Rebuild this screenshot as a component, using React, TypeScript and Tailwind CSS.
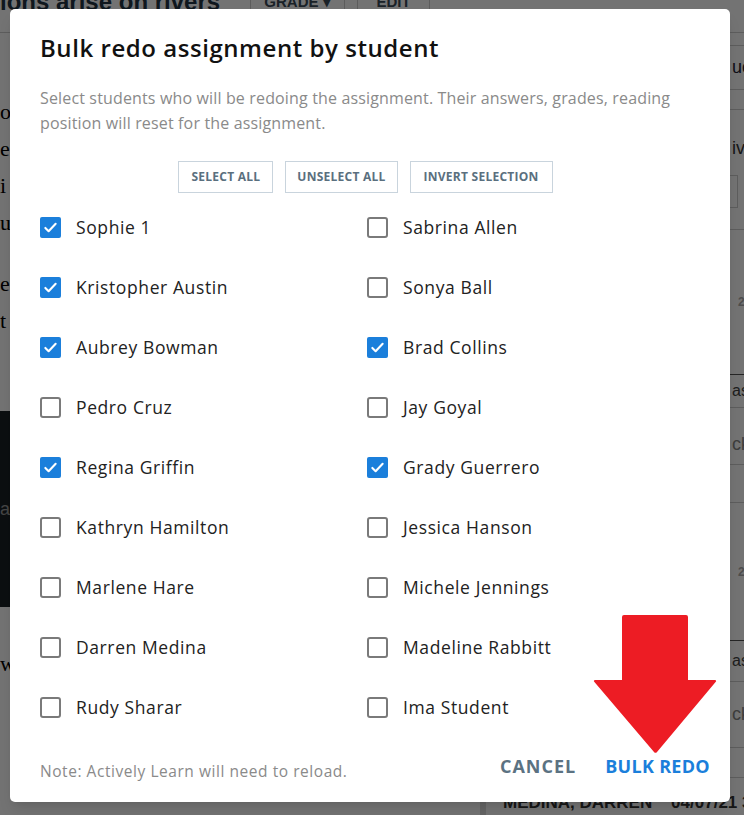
import React, { useState } from 'react';

type Student = {
  name: string;
  checked: boolean;
};

const initialStudents: Student[] = [
  { name: 'Sophie 1', checked: true },
  { name: 'Sabrina Allen', checked: false },
  { name: 'Kristopher Austin', checked: true },
  { name: 'Sonya Ball', checked: false },
  { name: 'Aubrey Bowman', checked: true },
  { name: 'Brad Collins', checked: true },
  { name: 'Pedro Cruz', checked: false },
  { name: 'Jay Goyal', checked: false },
  { name: 'Regina Griffin', checked: true },
  { name: 'Grady Guerrero', checked: true },
  { name: 'Kathryn Hamilton', checked: false },
  { name: 'Jessica Hanson', checked: false },
  { name: 'Marlene Hare', checked: false },
  { name: 'Michele Jennings', checked: false },
  { name: 'Darren Medina', checked: false },
  { name: 'Madeline Rabbitt', checked: false },
  { name: 'Rudy Sharar', checked: false },
  { name: 'Ima Student', checked: false },
];

const Checkbox = ({ checked }: { checked: boolean }) =>
  checked ? (
    <span className="flex h-[21px] w-[21px] shrink-0 items-center justify-center rounded-[2px] bg-[#1b7fdb]">
      <svg width="15" height="15" viewBox="0 0 16 16" fill="none">
        <path d="M2.5 8.5l3.5 3.5 7.5-8" stroke="white" strokeWidth="2.2" strokeLinecap="round" strokeLinejoin="round" />
      </svg>
    </span>
  ) : (
    <span className="h-[21px] w-[21px] shrink-0 rounded-[3px] border-2 border-[#7a7a7a] bg-white" />
  );

// the page that sits dimmed behind the dialog
const BackgroundPage = () => (
  <div className="flex h-[815px] w-full flex-col bg-white font-['Liberation_Sans',sans-serif]">
    <div className="flex h-[33px] shrink-0 border-b border-[#cfcfcf]">
      <span className="-mt-[10px] w-[250px] text-[24px] font-bold leading-[24px] text-[#223344]">ions arise on rivers</span>
      <span className="-mt-[7px] flex h-[39px] w-[95px] justify-center border-x border-[#cfcfcf] text-[15px] font-bold leading-[18px] text-[#3a4a58]">GRADE ▾</span>
      <span className="-mt-[7px] ml-[12px] flex h-[39px] w-[73px] justify-center border-x border-[#cfcfcf] text-[15px] font-bold leading-[18px] text-[#3a4a58]">EDIT</span>
    </div>
    <div className="flex flex-1">
      <div className="flex w-[275px] flex-col font-['Liberation_Serif',serif] text-[22px] leading-[37px] text-black">
        <div className="flex flex-col pt-[60px]">
          <span>o</span>
          <span>e</span>
          <span>i</span>
          <span>u</span>
          <span className="mt-[24px]">e</span>
          <span>t</span>
        </div>
        <div className="mt-[72px] flex h-[196px] items-center bg-[#1c2227] font-['Liberation_Sans',sans-serif] text-[18px] text-[#999]">as</div>
        <span className="mt-[38px]">w</span>
      </div>
      <div className="flex-1" />
      <div className="flex w-[264px] flex-col border-l-[6px] border-[#ddd] text-[18px]">
        <div className="h-[12px]" />
        <div className="flex h-[45px] items-center border-y border-[#cfcfcf] pl-[246px] text-[#223]">uc</div>
        <div className="h-[20px] border-b border-[#cfcfcf]" />
        <div className="flex h-[120px] flex-col border-b border-[#cfcfcf] pl-[246px] pt-[26px] text-[#333]">
          <span className="leading-[24px]">ivi</span>
          <span className="-ml-[10px] mt-[15px] h-[33px] w-[16px] border border-[#cfcfcf]" />
        </div>
        <div className="flex h-[145px] items-center border-b border-[#555] pl-[252px] text-[12px] font-bold text-[#aaa]">21</div>
        <div className="flex h-[33px] items-center border-b border-[#cfcfcf] pl-[246px] text-[16px] text-[#444]">asi</div>
        <div className="flex h-[57px] items-end border-b border-[#cfcfcf] pb-[6px] pl-[246px] text-[#888]">ck</div>
        <div className="h-[38px] border-b border-[#cfcfcf]" />
        <div className="flex h-[138px] items-center border-b border-[#555] pl-[252px] text-[12px] font-bold text-[#aaa]">21</div>
        <div className="flex h-[41px] items-center border-b border-[#cfcfcf] pl-[246px] text-[16px] text-[#444]">asi</div>
        <div className="flex h-[66px] items-center border-b border-[#cfcfcf] pl-[246px] text-[#888]">ck</div>
        <div className="h-[30px] border-b border-[#cfcfcf]" />
        <div className="whitespace-nowrap pl-[17px] pt-[14px] text-[17px] font-bold leading-[22px] text-[#333]">MEDINA, DARREN&nbsp;&nbsp;&nbsp; 04/07/21 3:45</div>
      </div>
    </div>
  </div>
);

export default function App() {
  const [students, setStudents] = useState<Student[]>(initialStudents);

  const toggle = (idx: number) => {
    setStudents((prev) => prev.map((s, i) => (i === idx ? { ...s, checked: !s.checked } : s)));
  };
  const setAll = (fn: (s: Student) => boolean) => {
    setStudents((prev) => prev.map((s) => ({ ...s, checked: fn(s) })));
  };

  return (
    <div className="relative h-[815px] w-full overflow-hidden font-['Open_Sans',sans-serif]">
      <BackgroundPage />
      <div className="absolute inset-0 bg-black/55" />

      {/* DIALOG */}
      <div className="absolute left-[10px] top-[9px] flex h-[793px] w-[720px] flex-col rounded-[5px] bg-white px-[30px] pt-[23px] shadow-lg">
        <h2 className="text-[24px] font-semibold leading-[32px] tracking-[0.55px] text-[#111]">
          Bulk redo assignment by student
        </h2>
        <p className="mt-[22px] text-[16px] leading-[25px] tracking-[0.15px] text-[#8a8a8a]">
          Select students who will be redoing the assignment. Their answers, grades, reading position will reset for the assignment.
        </p>

        <div className="mt-[25px] flex justify-center gap-[12px] pr-[9px]">
          {[
            { label: 'SELECT ALL', fn: () => true, cls: 'px-[12px]' },
            { label: 'UNSELECT ALL', fn: () => false, cls: 'px-[11px]' },
            { label: 'INVERT SELECTION', fn: (s: Student) => !s.checked, cls: 'px-[13px]' },
          ].map((b) => (
            <button
              key={b.label}
              onClick={() => setAll(b.fn)}
              className={`h-[32px] border border-[#c9d4dd] text-[12px] font-bold tracking-[0.25px] text-[#5a6f7e] ${b.cls}`}
            >
              {b.label}
            </button>
          ))}
        </div>

        <div className="mt-[10px] grid grid-cols-[327px_1fr] gap-y-[39px] pt-[14px]">
          {students.map((s, i) => (
            <label key={s.name} className="flex h-[21px] cursor-pointer items-center gap-[15px]" onClick={() => toggle(i)}>
              <Checkbox checked={s.checked} />
              <span className="text-[17.5px] leading-none tracking-[0.6px] text-[#222]">{s.name}</span>
            </label>
          ))}
        </div>

        <div className="-mr-[10px] mt-auto flex items-center pb-[19px]">
          <span className="mt-[9px] text-[15.5px] tracking-[0.55px] text-[#8a8a8a]">Note: Actively Learn will need to reload.</span>
          <div className="ml-auto flex items-center gap-[29px]">
            <button className="text-[18px] font-bold tracking-[1px] text-[#5b7282]">CANCEL</button>
            <button className="text-[18px] font-bold tracking-[0.3px] text-[#1b7fdb]">BULK REDO</button>
          </div>
        </div>
      </div>

      {/* red annotation arrow */}
      <svg className="absolute left-[593px] top-[614px]" width="124" height="140" viewBox="0 0 124 140">
        <path d="M31 1h62a2 2 0 0 1 2 2v63h27a1 1 0 0 1 1 1.5L64 138a2 2 0 0 1-3 0L1 67.5A1 1 0 0 1 2 66h27V3a2 2 0 0 1 2-2z" fill="#ed1c24" />
      </svg>
    </div>
  );
}
